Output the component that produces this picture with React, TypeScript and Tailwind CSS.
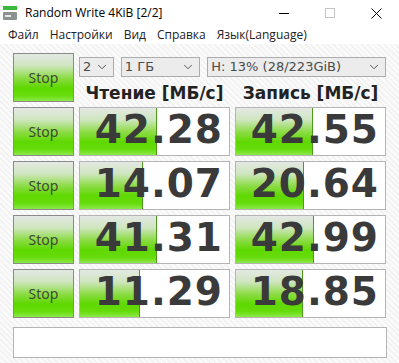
import { ChevronDown } from 'lucide-react';

// 1 row of results: read / write in MB/s and the fill width of each bar (px of 150)
type Row = { read: string; write: string; readBar: number; writeBar: number };

const rows: Row[] = [
  { read: '42.28', write: '42.55', readBar: 77, writeBar: 77 },
  { read: '14.07', write: '20.64', readBar: 63, writeBar: 68 },
  { read: '41.31', write: '42.99', readBar: 77, writeBar: 78 },
  { read: '11.29', write: '18.85', readBar: 60, writeBar: 67 },
];

const greenGrad =
  'bg-[linear-gradient(180deg,#e4e8e4_0%,#cfe6c0_25%,#8fdc4a_50%,#5fd800_72%,#66dc0c_88%,#8ee84a_100%)]';

function StopButton() {
  return (
    <div
      className={`w-[61px] h-[49px] shrink-0 border border-[#8a8a8a] ${greenGrad} flex items-center justify-center text-[14px] text-[#3d4a33] font-['Noto_Sans',sans-serif]`}
    >
      Stop
    </div>
  );
}

function ValueBox({ value, bar }: { value: string; bar: number }) {
  return (
    <div className="relative w-[151px] h-[49px] border border-[#b4b4b4] bg-white overflow-hidden">
      <div
        className={`absolute left-0 top-0 bottom-0 border-r border-[#4c9a1c] ${greenGrad}`}
        style={{ width: bar }}
      />
      <div className="relative h-full flex items-center justify-end pr-[6px] pb-[4px] text-[39px] font-bold tracking-[1px] text-[#3a3a3a] font-['DejaVu_Sans',sans-serif] leading-none">
        {value}
      </div>
    </div>
  );
}

function Combo({ width, label }: { width: number; label: string }) {
  return (
    <div
      className="h-[20px] flex items-center justify-between border border-[#adadad] bg-[#ececec] pl-[3px] pr-[4px] text-[13px] text-[#4a4a4a] font-['DejaVu_Sans',sans-serif]"
      style={{ width }}
    >
      <span>{label}</span>
      <ChevronDown size={14} strokeWidth={1.5} className="text-[#444]" />
    </div>
  );
}

export default function App() {
  return (
    <div className="w-[399px] h-[363px] flex flex-col bg-white font-['Open_Sans',sans-serif] overflow-hidden">
      {/* タイトルバー */}
      <div className="h-[26px] flex items-center bg-white">
        <svg width="14" height="14" viewBox="0 0 14 14" className="ml-[3px]">
          <rect x="0" y="0" width="14" height="4" fill="#3cb83c" />
          <rect x="0" y="6" width="14" height="8" rx="1" fill="#8c9290" />
          <rect x="2" y="9" width="6" height="2" fill="#e8e8e8" />
        </svg>
        <span className="ml-[8px] text-[12px] text-black">Random Write 4KiB [2/2]</span>
        <div className="ml-auto flex h-full">
          <div className="w-[46px] flex items-center justify-center">
            <div className="w-[10px] h-px bg-black" />
          </div>
          <div className="w-[46px] flex items-center justify-center">
            <div className="w-[10px] h-[10px] border border-[#c4c4c4]" />
          </div>
          <div className="w-[46px] flex items-center justify-center">
            <svg width="11" height="11" viewBox="0 0 11 11">
              <path d="M0.5 0.5L10.5 10.5M10.5 0.5L0.5 10.5" stroke="#000" strokeWidth="1" />
            </svg>
          </div>
        </div>
      </div>

      {/* メニュー */}
      <div className="h-[18px] flex items-center text-[12px] text-[#222] pl-[8px] gap-[11px]">
        <span>Файл</span>
        <span>Настройки</span>
        <span>Вид</span>
        <span>Справка</span>
        <span>Язык(Language)</span>
      </div>

      {/* 本体 */}
      <div className="flex-1 bg-[repeating-linear-gradient(45deg,#f3f3f3_0px,#f3f3f3_2px,#fbfbfb_2px,#fbfbfb_4px)] pl-[13px] pt-[9px]">
        <div className="flex flex-col gap-[5px]">
          <div className="flex gap-[5px] h-[49px]">
            <StopButton />
            <div className="flex flex-col w-[307px]">
              <div className="flex gap-[7px] mt-[4px]">
                <Combo width={35} label="2" />
                <Combo width={80} label="1 ГБ" />
                <Combo width={180} label="H: 13% (28/223GiB)" />
              </div>
              <div className="flex gap-[5px] mt-[8px] text-[17px] leading-none font-bold text-[#222] font-['DejaVu_Sans',sans-serif]">
                <div className="w-[151px] text-center">Чтение [МБ/с]</div>
                <div className="w-[151px] text-center">Запись [МБ/с]</div>
              </div>
            </div>
          </div>

          {rows.map((r, i) => (
            <div key={i} className="flex gap-[5px]">
              <StopButton />
              <ValueBox value={r.read} bar={r.readBar} />
              <ValueBox value={r.write} bar={r.writeBar} />
            </div>
          ))}

          <div className="mt-[4px] w-[374px] h-[31px] border border-[#b4b4b4] bg-white" />
        </div>
      </div>
    </div>
  );
}
